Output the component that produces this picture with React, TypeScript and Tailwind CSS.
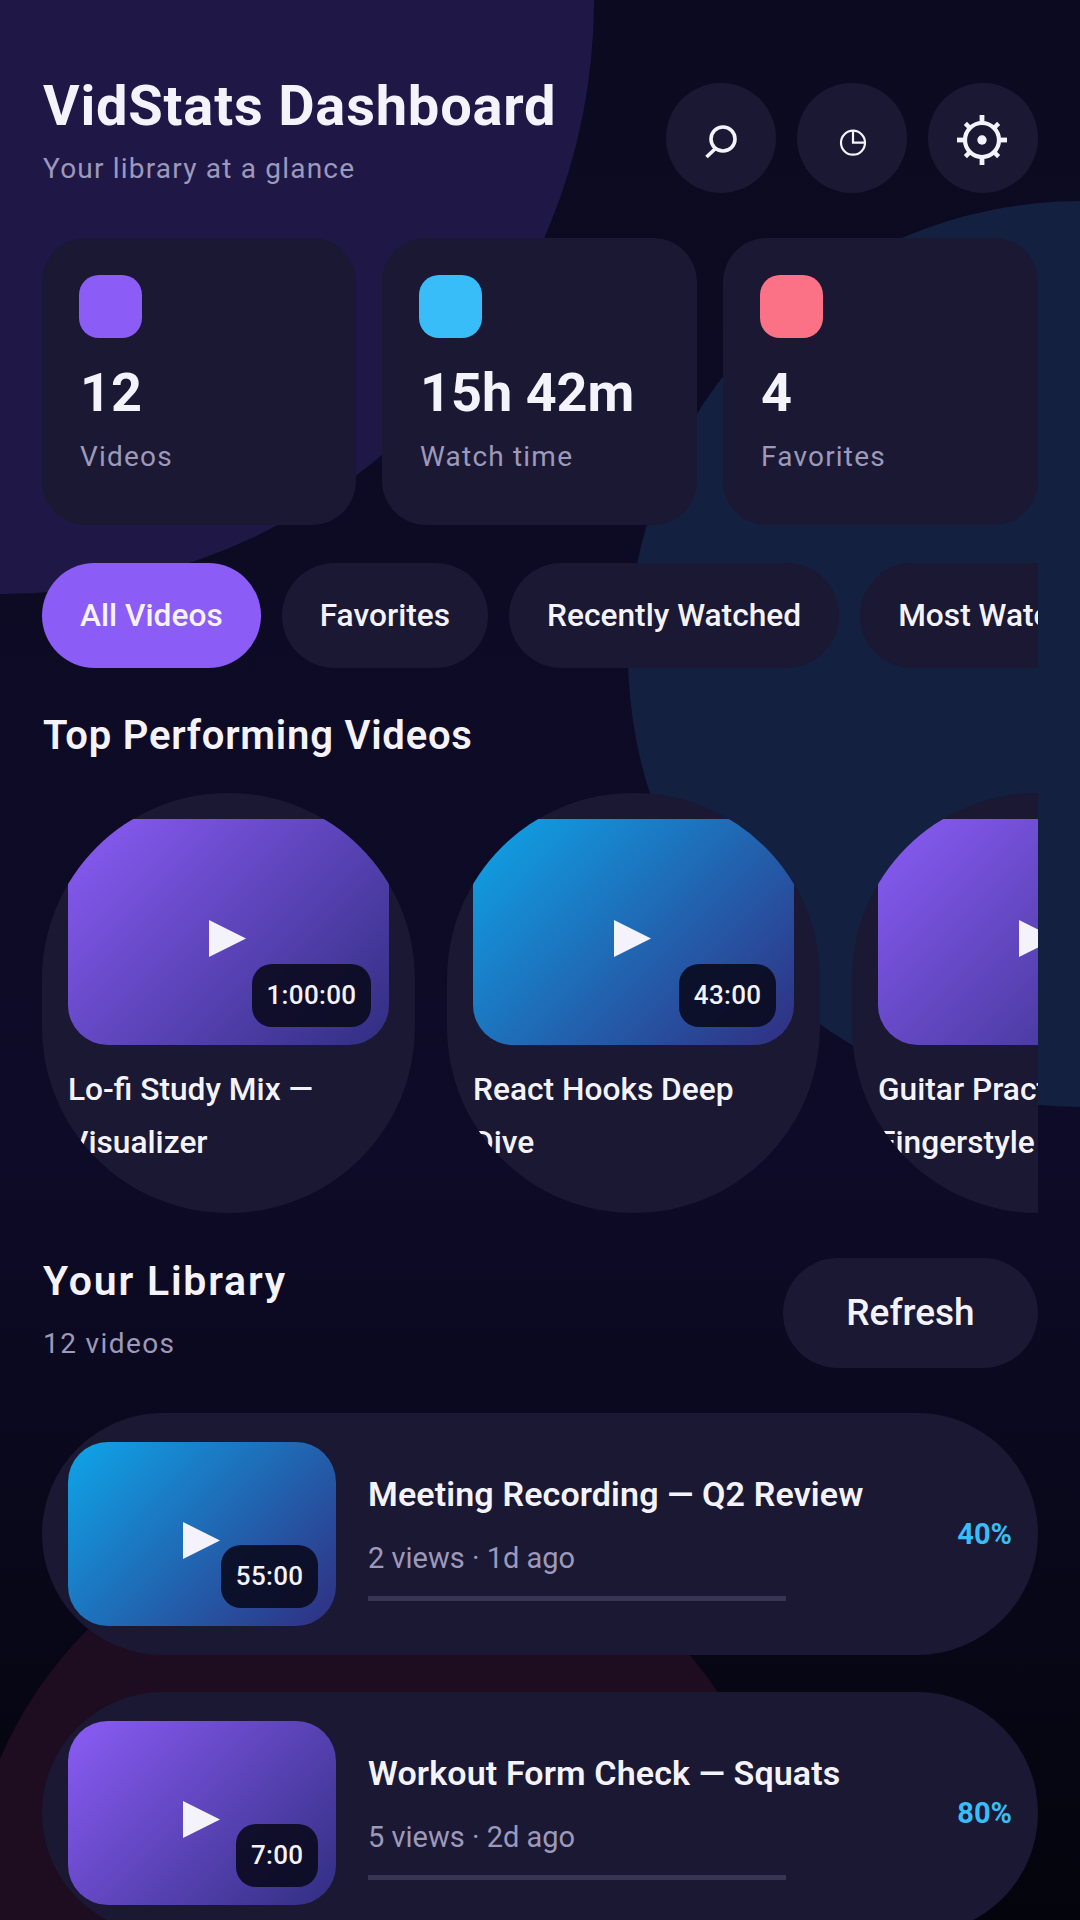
import React from "react";

type Tone = "violet" | "sky";

const topVideos = [
  { title: "Lo-fi Study Mix — Visualizer", time: "1:00:00", tone: "violet" as Tone },
  { title: "React Hooks Deep Dive", time: "43:00", tone: "sky" as Tone },
  { title: "Guitar Practice — Fingerstyle Basics", time: "12:00", tone: "violet" as Tone },
];

const library = [
  { title: "Meeting Recording — Q2 Review", meta: "2 views · 1d ago", time: "55:00", pct: "40%", tone: "sky" as Tone },
  { title: "Workout Form Check — Squats", meta: "5 views · 2d ago", time: "7:00", pct: "80%", tone: "violet" as Tone },
];

const stats = [
  { value: "12", label: "Videos", color: "bg-[#8b5cf6]" },
  { value: "15h 42m", label: "Watch time", color: "bg-[#38bdf8]" },
  { value: "4", label: "Favorites", color: "bg-[#fb7185]" },
];

const toneClass: Record<Tone, string> = {
  violet: "from-[#8b5cf6] to-[#312e81]",
  sky: "from-[#0ea5e9] to-[#312e81]",
};

function SearchIcon() {
  return (
    <svg width="60" height="60" viewBox="0 0 60 60" fill="none" stroke="#f4f3fb">
      <circle cx="32" cy="31" r="12" strokeWidth="3.6" />
      <path d="M24 41 L15.5 49" strokeWidth="3.6" />
    </svg>
  );
}

function PieIcon() {
  return (
    <svg width="60" height="60" viewBox="0 0 60 60" fill="none" stroke="#f4f3fb" strokeWidth="2.2">
      <circle cx="31" cy="34.7" r="12" />
      <path d="M31 22.7 V34.7 H43" />
    </svg>
  );
}

function GearIcon() {
  return (
    <svg width="60" height="60" viewBox="0 0 60 60" fill="none" stroke="#f4f3fb">
      <circle cx="29" cy="32" r="17" strokeWidth="4.2" />
      <circle cx="29" cy="32" r="4.7" fill="#f4f3fb" stroke="none" />
      {[0, 90, 180, 270].map((deg) => (
        <path key={deg} d="M29 16 V7" strokeWidth="4.8" transform={`rotate(${deg} 29 32)`} />
      ))}
      {[45, 135, 225, 315].map((deg) => (
        <path key={deg} d="M29 16 V8.5" strokeWidth="4.4" transform={`rotate(${deg} 29 32)`} />
      ))}
    </svg>
  );
}

function Thumb({ time, tone, className }: { time: string; tone: Tone; className: string }) {
  return (
    <div className={`relative flex shrink-0 items-center justify-center rounded-[40px] bg-linear-135/srgb ${toneClass[tone]} ${className}`}>
      <svg className="mt-3 -ml-[2px]" width="37" height="37" viewBox="0 0 37 37">
        <polygon points="0,0 37,18.5 0,37" fill="#f4f3fb" />
      </svg>
      <span className="absolute right-[18px] bottom-[18px] flex h-[63px] items-center rounded-[20px] bg-[#0a0a1e]/90 px-[14.5px] text-[26px] font-medium tracking-[0.35px] text-[#f4f3fb]">
        {time}
      </span>
    </div>
  );
}

export default function App() {
  return (
    <div className="relative h-[1920px] w-[1080px] overflow-hidden bg-linear-to-b/srgb from-[#0c0a20] via-[#0e0b28] via-60% to-[#04040c] font-['Roboto',sans-serif] text-[#f4f3fb]">
      {/* background blobs */}
      <div className="absolute -left-[594px] -top-[594px] size-[1188px] rounded-full bg-[#1f1847]" />
      <div className="absolute left-[628px] top-[201px] size-[906px] rounded-full bg-[#13203f]" />
      <div className="absolute -left-[33px] top-[1510px] size-[820px] rounded-full bg-[#1e0c20]" />

      <div className="relative px-[42px] pt-[75px]">
        {/* Header */}
        <header className="flex items-start justify-between">
          <div className="ml-px">
            <h1 className="text-[56px] leading-[62px] font-bold tracking-[0.8px]">VidStats Dashboard</h1>
            <p className="mt-[14px] text-[28px] leading-[36px] tracking-[1.2px] text-[#9d99bb]">Your library at a glance</p>
          </div>
          <div className="mt-2 flex gap-[21px]">
            <button className="flex size-[110px] items-center justify-center rounded-full bg-[#1a1833]"><SearchIcon /></button>
            <button className="flex size-[110px] items-center justify-center rounded-full bg-[#1a1833]"><PieIcon /></button>
            <button className="flex size-[110px] items-center justify-center rounded-full bg-[#1a1833]"><GearIcon /></button>
          </div>
        </header>

        {/* Stats */}
        <div className="mt-[45px] grid grid-cols-[314px_315px_315px] gap-[26px]">
          {stats.map((s) => (
            <div key={s.label} className="rounded-[44px] bg-[#1a1833] p-[37px] pb-[50px]">
              <div className={`size-[63px] rounded-[20px] ${s.color}`} />
              <div className="mt-6 ml-px text-[54px] leading-[62px] font-bold">{s.value}</div>
              <div className="mt-[15px] ml-px text-[28px] leading-[36px] tracking-[1.2px] text-[#9d99bb]">{s.label}</div>
            </div>
          ))}
        </div>

        {/* Filter chips */}
        <div className="mt-[38px] flex gap-[21px] overflow-hidden">
          {["All Videos", "Favorites", "Recently Watched", "Most Watched"].map((chip, i) => (
            <button
              key={chip}
              className={`h-[105px] shrink-0 rounded-full px-[38px] text-[31.7px] font-medium ${i === 0 ? "bg-[#8b5cf6]" : "bg-[#1a1833]"}`}
            >
              {chip}
            </button>
          ))}
        </div>

        {/* Top performing */}
        <h2 className="mt-[45px] ml-px text-[40px] leading-[46px] font-semibold tracking-[0.78px]">Top Performing Videos</h2>
        <div className="mt-[34px] flex gap-[32px] overflow-hidden">
          {topVideos.map((v) => (
            <div key={v.title} className="h-[420px] w-[373px] shrink-0 overflow-hidden rounded-[186px] bg-[#1a1833] px-[26px] pt-[26px]">
              <Thumb time={v.time} tone={v.tone} className="h-[226px] w-[321px]" />
              <p className="mt-[18px] text-[31.7px] leading-[53px] font-medium">{v.title}</p>
            </div>
          ))}
        </div>

        {/* Library */}
        <div className="mt-[45px] flex items-start justify-between">
          <div className="ml-px">
            <h2 className="text-[41px] leading-[46px] font-semibold tracking-[1.8px]">Your Library</h2>
            <p className="mt-[22px] text-[28px] leading-[36px] tracking-[1.4px] text-[#9d99bb]">12 videos</p>
          </div>
          <button className="h-[110px] w-[255px] rounded-full bg-[#1a1833] text-[37px] font-medium">Refresh</button>
        </div>

        <div className="mt-[45px] flex flex-col gap-[37px]">
          {library.map((v) => (
            <div key={v.title} className="flex h-[242px] items-start overflow-hidden rounded-[121px] bg-[#1a1833] pl-[26px] pr-[26px] pt-[29px]">
              <Thumb time={v.time} tone={v.tone} className="h-[184px] w-[268px]" />
              <div className="ml-[32px] mt-[32px] w-[418px]">
                <p className="text-[34px] leading-[40px] font-semibold tracking-[0.13px] whitespace-nowrap">{v.title}</p>
                <p className="mt-[26px] text-[29px] leading-[36px] text-[#9d99bb]">{v.meta}</p>
                <div className="mt-5 h-[5px] bg-[#373454]" />
              </div>
              <span className="ml-auto mt-[76px] text-[29px] leading-[32px] font-bold text-[#38bdf8]">{v.pct}</span>
            </div>
          ))}
        </div>
      </div>
    </div>
  );
}
